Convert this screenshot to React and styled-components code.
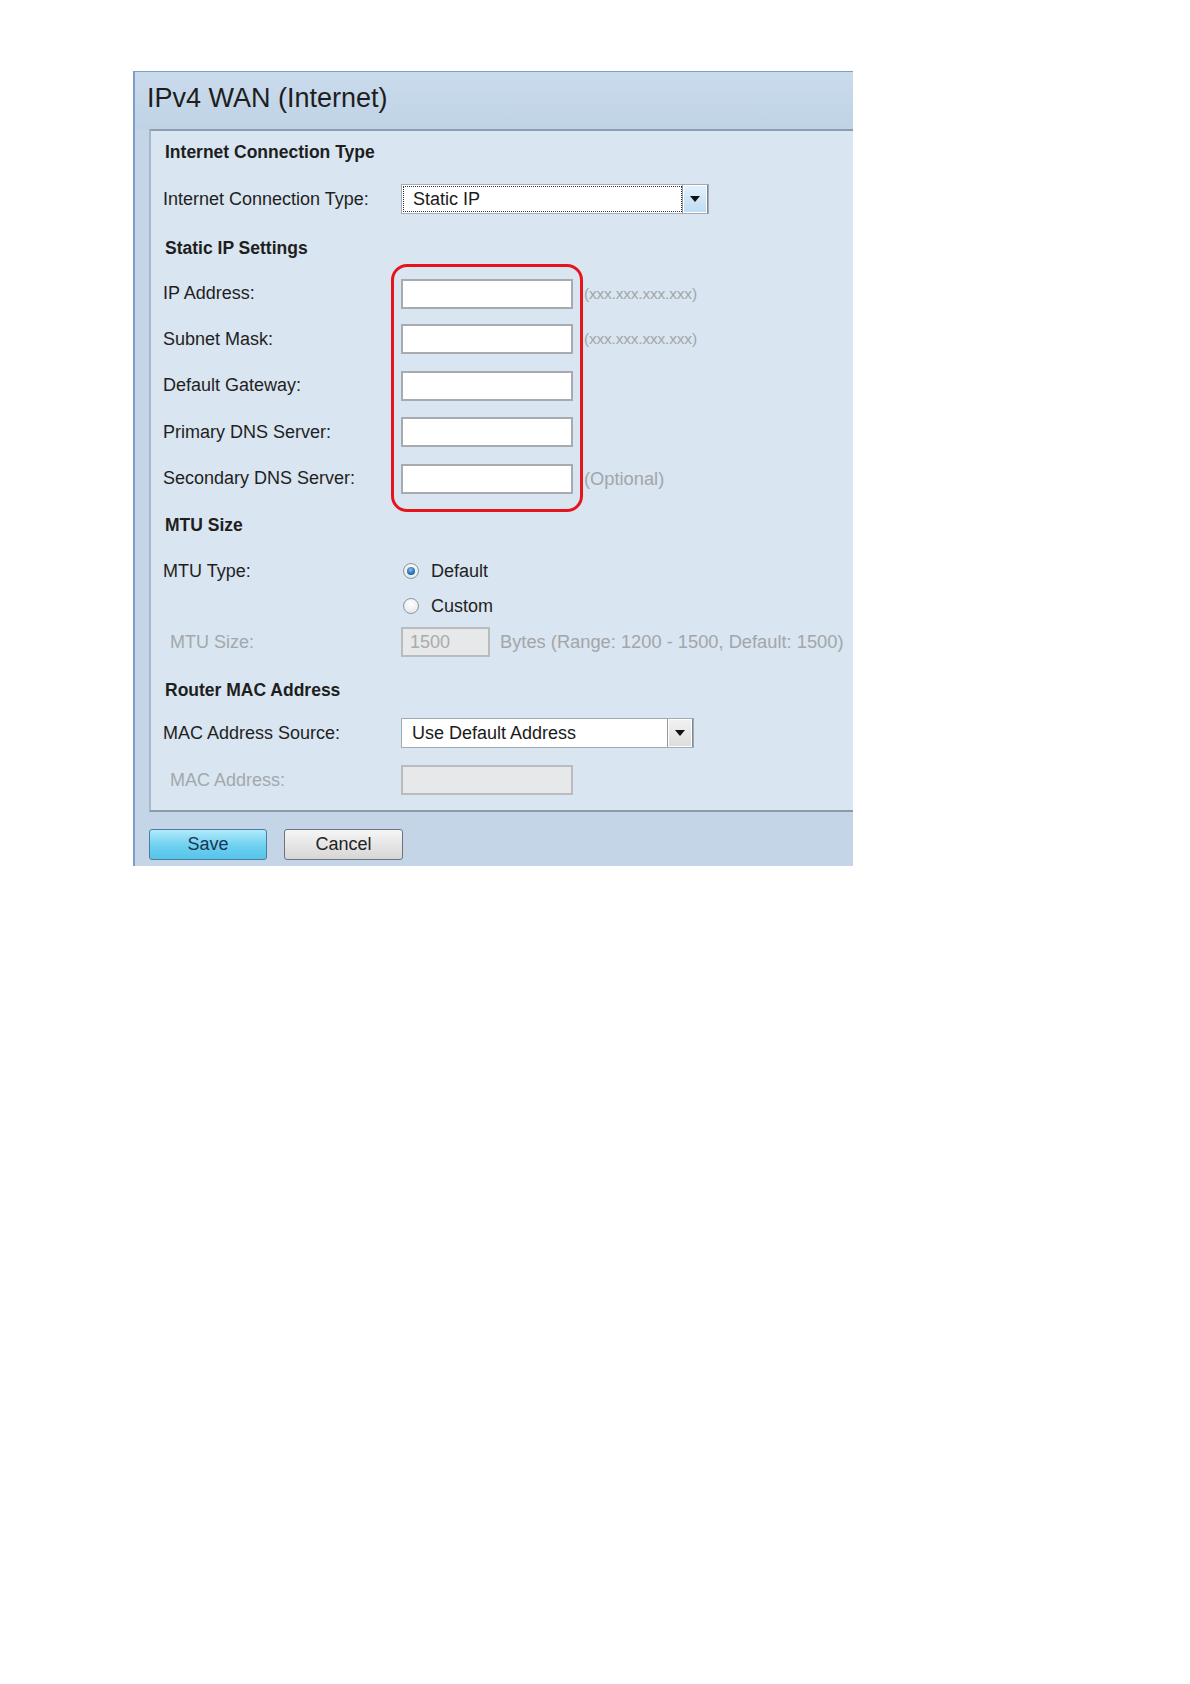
import React from 'react';
import styled, { createGlobalStyle } from 'styled-components';

const GlobalStyle = createGlobalStyle`
  body {
    margin: 0;
    background: #ffffff;
    font-family: "Liberation Sans", Arial, sans-serif;
    color: #222;
  }
`;

const Page = styled.div`
  padding: 71px 0 0 133px;
`;

const Panel = styled.div`
  width: 720px;
  box-sizing: border-box;
  background: #c3d5e7;
  border-top: 1px solid #7f9fc4;
  border-left: 2px solid #7d9fc5;
`;

const Header = styled.div`
  height: 57px;
  box-sizing: border-box;
  display: flex;
  align-items: center;
  padding: 0 0 4px 12px;
  background: linear-gradient(to bottom, #c9dbec, #c0d3e6);
`;

const Title = styled.h1`
  margin: 0;
  font-size: 27px;
  font-weight: normal;
  color: #1e1e1e;
  line-height: 1;
`;

const Body = styled.div`
  position: relative;
  margin-left: 14px;
  padding-bottom: 2px;
  background: #d9e5f0;
  border-top: 2px solid #8d9fae;
  border-left: 2px solid #a5b7c9;
  border-bottom: 2px solid #8b9baa;
`;

const Row = styled.div`
  display: flex;
  align-items: center;
  height: ${(p) => p.$h || 46}px;
  padding-left: 12px;
  font-size: 18px;
`;

const Heading = styled(Row)`
  padding-left: 14px;
  font-weight: bold;
  font-size: 17.5px;
  color: #1e1e1e;
`;

const Label = styled.div`
  width: ${(p) => (p.$muted ? 231 : 238)}px;
  padding-left: ${(p) => (p.$muted ? 7 : 0)}px;
  flex-shrink: 0;
  color: ${(p) => (p.$muted ? '#a3a8ad' : '#1f1f1f')};
`;

const TextInput = styled.div`
  width: ${(p) => p.$w || 172}px;
  height: 30px;
  box-sizing: border-box;
  border: 2px solid ${(p) => (p.$disabled ? '#b9bcbf' : '#a7abaf')};
  background: ${(p) => (p.$disabled ? '#e6e8ea' : '#ffffff')};
  color: #a9abad;
  display: flex;
  align-items: center;
  padding-left: 7px;
  flex-shrink: 0;
`;

const Hint = styled.span`
  margin-left: ${(p) => p.$gap || 11}px;
  color: #a2a6aa;
  font-size: ${(p) => (p.$small ? 15.5 : 18.3)}px;
  letter-spacing: ${(p) => (p.$small ? '-0.2px' : '0')};
  white-space: nowrap;
`;

const SelectBox = styled.div`
  width: ${(p) => p.$w}px;
  height: 30px;
  box-sizing: border-box;
  display: flex;
  border: 1px solid #a2abb4;
  background: #fff;
`;

const SelectValue = styled.div`
  flex: 1;
  display: flex;
  align-items: center;
  padding-left: ${(p) => (p.$focus ? 9 : 10)}px;
  margin: ${(p) => (p.$focus ? '1px 0 1px 1px' : '0')};
  border: ${(p) => (p.$focus ? '1px dotted #333' : 'none')};
  color: #1a1a1a;
`;

const DropButton = styled.div`
  width: 24px;
  display: flex;
  align-items: center;
  justify-content: center;
  border-left: 1px solid #8e9aa6;
  background: ${(p) =>
    p.$blue
      ? 'linear-gradient(to bottom, #e4f1fb, #bcdcf2)'
      : 'linear-gradient(to bottom, #f2f2f2, #dcdcdc)'};
  box-shadow: inset 0 0 0 1px #ffffff;
  border-right: 1px solid #7d8894;
`;

const Arrow = styled.span`
  width: 0;
  height: 0;
  border-left: 5px solid transparent;
  border-right: 5px solid transparent;
  border-top: 6px solid #111;
`;

const RadioOption = styled.label`
  display: flex;
  align-items: center;
  margin-left: 2px;
  gap: 12px;
  color: #1f1f1f;
`;

const RadioCircle = styled.span`
  width: 16px;
  height: 16px;
  box-sizing: border-box;
  border-radius: 50%;
  border: 1px solid #8f969c;
  background: radial-gradient(circle at 50% 35%, #ffffff, #dfe3e6);
  display: flex;
  align-items: center;
  justify-content: center;

  &::after {
    content: '';
    display: ${(p) => (p.$checked ? 'block' : 'none')};
    width: 8px;
    height: 8px;
    border-radius: 50%;
    background: radial-gradient(circle at 45% 35%, #7fc0f0, #1b5fa6 70%);
  }
`;

const Highlight = styled.div`
  position: absolute;
  left: 240px;
  top: 133px;
  width: 192px;
  height: 248px;
  box-sizing: border-box;
  border: 3px solid #e5141d;
  border-radius: 16px;
  pointer-events: none;
`;

const Footer = styled.div`
  display: flex;
  gap: 17px;
  padding: 17px 0 6px 14px;
`;

const Button = styled.button`
  width: ${(p) => (p.$primary ? 118 : 119)}px;
  height: 31px;
  border-radius: 3px;
  border: 1px solid ${(p) => (p.$primary ? '#4d7d9c' : '#6f7478')};
  background: ${(p) =>
    p.$primary
      ? 'linear-gradient(to bottom, #b0eafb, #6dd0f0 55%, #56c4ea)'
      : 'linear-gradient(to bottom, #f6f6f6, #e4e4e4 55%, #d6d6d6)'};
  color: ${(p) => (p.$primary ? '#1b3552' : '#222')};
  font-family: "Liberation Sans", Arial, sans-serif;
  font-size: 18px;
  padding: 0;
  cursor: pointer;
`;

const Select = ({ width, value, focus, blue }) => (
  <SelectBox $w={width}>
    <SelectValue $focus={focus}>{value}</SelectValue>
    <DropButton $blue={blue}>
      <Arrow />
    </DropButton>
  </SelectBox>
);

const ipRows = [
  { label: 'IP Address:', hint: '(xxx.xxx.xxx.xxx)', small: true, h: 45 },
  { label: 'Subnet Mask:', hint: '(xxx.xxx.xxx.xxx)', small: true, h: 46 },
  { label: 'Default Gateway:', h: 47 },
  { label: 'Primary DNS Server:', h: 46 },
  { label: 'Secondary DNS Server:', hint: '(Optional)', h: 47 },
];

export default function App() {
  return (
    <Page>
      <GlobalStyle />
      <Panel>
        <Header>
          <Title>IPv4 WAN (Internet)</Title>
        </Header>
        <Body>
          <Heading $h={42}>Internet Connection Type</Heading>
          <Row $h={52}>
            <Label>Internet Connection Type:</Label>
            <Select width={308} value="Static IP" focus blue />
          </Row>

          <Heading>Static IP Settings</Heading>
          {ipRows.map((r) => (
            <Row key={r.label} $h={r.h}>
              <Label>{r.label}</Label>
              <TextInput />
              {r.hint && <Hint $small={r.small}>{r.hint}</Hint>}
            </Row>
          ))}

          <Heading>MTU Size</Heading>
          <Row $h={46}>
            <Label>MTU Type:</Label>
            <RadioOption>
              <RadioCircle $checked />
              Default
            </RadioOption>
          </Row>
          <Row $h={24}>
            <Label />
            <RadioOption>
              <RadioCircle />
              Custom
            </RadioOption>
          </Row>
          <Row $h={48}>
            <Label $muted>MTU Size:</Label>
            <TextInput $w={89} $disabled>1500</TextInput>
            <Hint $gap={10}>Bytes (Range: 1200 - 1500, Default: 1500)</Hint>
          </Row>

          <Heading $h={48}>Router MAC Address</Heading>
          <Row $h={38}>
            <Label>MAC Address Source:</Label>
            <Select width={293} value="Use Default Address" />
          </Row>
          <Row $h={56}>
            <Label $muted>MAC Address:</Label>
            <TextInput $disabled />
          </Row>

          <Highlight />
        </Body>
        <Footer>
          <Button $primary>Save</Button>
          <Button>Cancel</Button>
        </Footer>
      </Panel>
    </Page>
  );
}
